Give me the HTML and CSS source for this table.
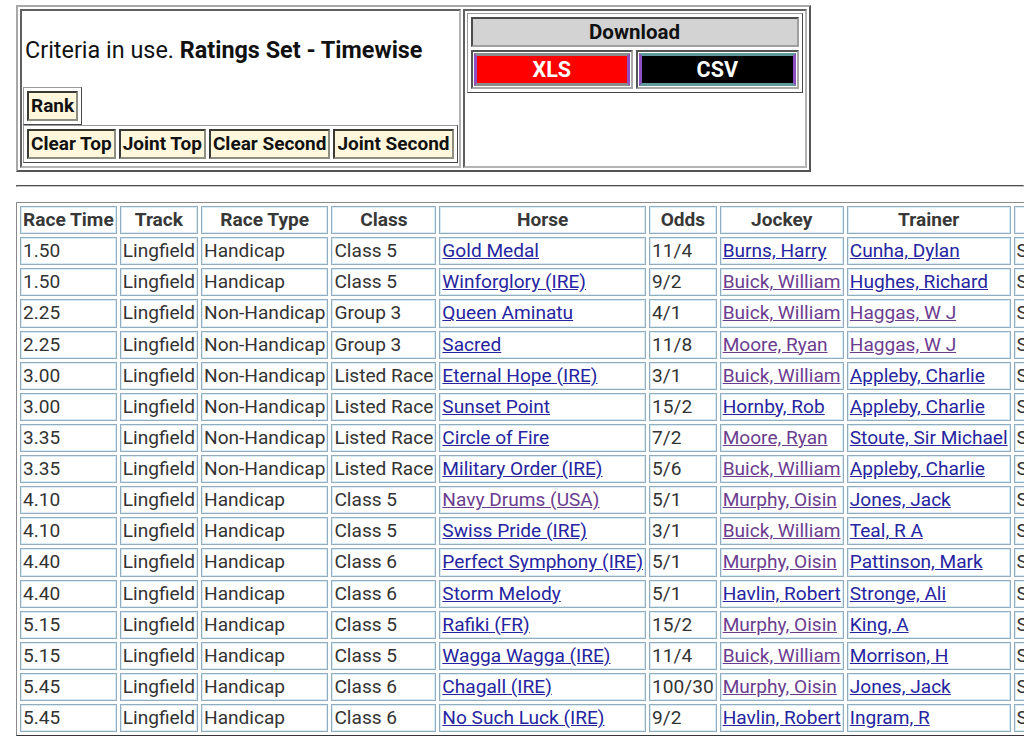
FILE: index.html
```html
<!DOCTYPE html>
<html>
<head>
<meta charset="utf-8">
<title>Ratings</title>
<link rel="stylesheet" href="styles.css">
</head>
<body>
<table class="top">
  <tr>
    <td class="crit">
      <p class="criteria">Criteria in use. <b>Ratings Set - Timewise</b></p>
      <table class="btns"><tr><td>Rank</td></tr></table>
      <table class="btns"><tr><td>Clear Top</td><td>Joint Top</td><td>Clear Second</td><td>Joint Second</td></tr></table>
    </td>
    <td class="dl">
      <table class="dltable">
        <tr><th colspan="2">Download</th></tr>
        <tr>
          <td class="dlcell"><div class="dlbtn xls">XLS</div></td>
          <td class="dlcell"><div class="dlbtn csv">CSV</div></td>
        </tr>
      </table>
    </td>
  </tr>
</table>
<hr class="sep">
<table class="races">
  <tr><th>Race Time</th><th>Track</th><th>Race Type</th><th>Class</th><th>Horse</th><th>Odds</th><th>Jockey</th><th>Trainer</th><th>Going</th></tr>
  <tr><td>1.50</td><td>Lingfield</td><td>Handicap</td><td>Class 5</td><td><a href="#">Gold Medal</a></td><td>11/4</td><td><a href="#">Burns, Harry</a></td><td><a href="#">Cunha, Dylan</a></td><td>Standard</td></tr>
  <tr><td>1.50</td><td>Lingfield</td><td>Handicap</td><td>Class 5</td><td><a href="#">Winforglory (IRE)</a></td><td>9/2</td><td><a class="v" href="#">Buick, William</a></td><td><a href="#">Hughes, Richard</a></td><td>Standard</td></tr>
  <tr><td>2.25</td><td>Lingfield</td><td>Non-Handicap</td><td>Group 3</td><td><a href="#">Queen Aminatu</a></td><td>4/1</td><td><a class="v" href="#">Buick, William</a></td><td><a class="v" href="#">Haggas, W J</a></td><td>Standard</td></tr>
  <tr><td>2.25</td><td>Lingfield</td><td>Non-Handicap</td><td>Group 3</td><td><a href="#">Sacred</a></td><td>11/8</td><td><a class="v" href="#">Moore, Ryan</a></td><td><a class="v" href="#">Haggas, W J</a></td><td>Standard</td></tr>
  <tr><td>3.00</td><td>Lingfield</td><td>Non-Handicap</td><td>Listed Race</td><td><a href="#">Eternal Hope (IRE)</a></td><td>3/1</td><td><a class="v" href="#">Buick, William</a></td><td><a href="#">Appleby, Charlie</a></td><td>Standard</td></tr>
  <tr><td>3.00</td><td>Lingfield</td><td>Non-Handicap</td><td>Listed Race</td><td><a href="#">Sunset Point</a></td><td>15/2</td><td><a href="#">Hornby, Rob</a></td><td><a href="#">Appleby, Charlie</a></td><td>Standard</td></tr>
  <tr><td>3.35</td><td>Lingfield</td><td>Non-Handicap</td><td>Listed Race</td><td><a href="#">Circle of Fire</a></td><td>7/2</td><td><a class="v" href="#">Moore, Ryan</a></td><td><a href="#">Stoute, Sir Michael</a></td><td>Standard</td></tr>
  <tr><td>3.35</td><td>Lingfield</td><td>Non-Handicap</td><td>Listed Race</td><td><a href="#">Military Order (IRE)</a></td><td>5/6</td><td><a class="v" href="#">Buick, William</a></td><td><a href="#">Appleby, Charlie</a></td><td>Standard</td></tr>
  <tr><td>4.10</td><td>Lingfield</td><td>Handicap</td><td>Class 5</td><td><a class="v" href="#">Navy Drums (USA)</a></td><td>5/1</td><td><a class="v" href="#">Murphy, Oisin</a></td><td><a href="#">Jones, Jack</a></td><td>Standard</td></tr>
  <tr><td>4.10</td><td>Lingfield</td><td>Handicap</td><td>Class 5</td><td><a href="#">Swiss Pride (IRE)</a></td><td>3/1</td><td><a class="v" href="#">Buick, William</a></td><td><a href="#">Teal, R A</a></td><td>Standard</td></tr>
  <tr><td>4.40</td><td>Lingfield</td><td>Handicap</td><td>Class 6</td><td><a href="#">Perfect Symphony (IRE)</a></td><td>5/1</td><td><a class="v" href="#">Murphy, Oisin</a></td><td><a href="#">Pattinson, Mark</a></td><td>Standard</td></tr>
  <tr><td>4.40</td><td>Lingfield</td><td>Handicap</td><td>Class 6</td><td><a href="#">Storm Melody</a></td><td>5/1</td><td><a href="#">Havlin, Robert</a></td><td><a href="#">Stronge, Ali</a></td><td>Standard</td></tr>
  <tr><td>5.15</td><td>Lingfield</td><td>Handicap</td><td>Class 5</td><td><a href="#">Rafiki (FR)</a></td><td>15/2</td><td><a class="v" href="#">Murphy, Oisin</a></td><td><a href="#">King, A</a></td><td>Standard</td></tr>
  <tr><td>5.15</td><td>Lingfield</td><td>Handicap</td><td>Class 5</td><td><a href="#">Wagga Wagga (IRE)</a></td><td>11/4</td><td><a class="v" href="#">Buick, William</a></td><td><a href="#">Morrison, H</a></td><td>Standard</td></tr>
  <tr><td>5.45</td><td>Lingfield</td><td>Handicap</td><td>Class 6</td><td><a href="#">Chagall (IRE)</a></td><td>100/30</td><td><a class="v" href="#">Murphy, Oisin</a></td><td><a href="#">Jones, Jack</a></td><td>Standard</td></tr>
  <tr><td>5.45</td><td>Lingfield</td><td>Handicap</td><td>Class 6</td><td><a href="#">No Such Luck (IRE)</a></td><td>9/2</td><td><a href="#">Havlin, Robert</a></td><td><a href="#">Ingram, R</a></td><td>Standard</td></tr>
</table>
</body>
</html>
```

FILE: styles.css
```css
html {
  overflow: hidden;
  background: #ffffff;
}

body {
  margin: 5px 0 0 16px;
  font-family: Roboto, "Noto Sans", sans-serif;
  color: #222222;
}

/* top criteria / download block */
.top {
  border: 2px outset #a8a8a8;
  border-spacing: 2px;
}

.top > tbody > tr > td {
  border: 2px inset #b4b4b4;
  vertical-align: top;
}

.crit {
  padding: 1px 1px 3px 1px;
}

.criteria {
  margin: 25px 0 23px 2px;
  font-size: 23.4px;
  line-height: 27px;
  color: #111111;
}

.criteria b {
  font-weight: 700;
}

.btns {
  border: 1px outset #9a9a9a;
  border-spacing: 3px;
}

.btns td {
  background: #fff7dc;
  border: 2px inset #8e8e80;
  padding: 2px 2px;
  font-size: 19px;
  line-height: 22px;
  font-weight: 700;
  color: #111111;
  white-space: nowrap;
}

.dl {
  width: 336px;
  padding: 2px;
}

.dltable {
  width: 100%;
  border: 1px outset #9a9a9a;
  border-spacing: 3px;
}

.dltable th {
  background: #d3d3d3;
  border: 2px inset #a0a0a0;
  padding: 2px;
  font-size: 20.5px;
  line-height: 22px;
  font-weight: 700;
  color: #111111;
}

.dlcell {
  width: 50%;
  border: 2px inset #a8a8a8;
  padding: 1px;
}

.dlbtn {
  border-style: solid;
  border-width: 3px;
  text-align: center;
  color: #ffffff;
  font-weight: 700;
  font-size: 21.5px;
  line-height: 27px;
}

.xls {
  background: #ff0000;
  border-color: #8c8c8c #8e4fc2;
}

.csv {
  background: #000000;
  border-color: #5f9a9c #8e4fc2;
}

.sep {
  margin: 13px 0 15px;
  border: 1px inset #c8c8c8;
  border-top-color: #a0a0a0;
  height: 0;
}

/* races table */
.races {
  border: 1px outset #8a8a8a;
  border-spacing: 3px;
  font-size: 19.1px;
}

.races th,
.races td {
  border: 1px solid #93adbc;
  box-shadow: inset 0 0 0 1px #d6ebf5;
  padding: 2px;
  line-height: 22.13px;
  white-space: nowrap;
  color: #333333;
}

.races th {
  font-weight: 700;
  text-align: center;
  color: #383838;
}

.races td {
  text-align: left;
}

.races a {
  color: #25259f;
  text-decoration: underline;
}

.races a.v {
  color: #6b3d8f;
}
```
